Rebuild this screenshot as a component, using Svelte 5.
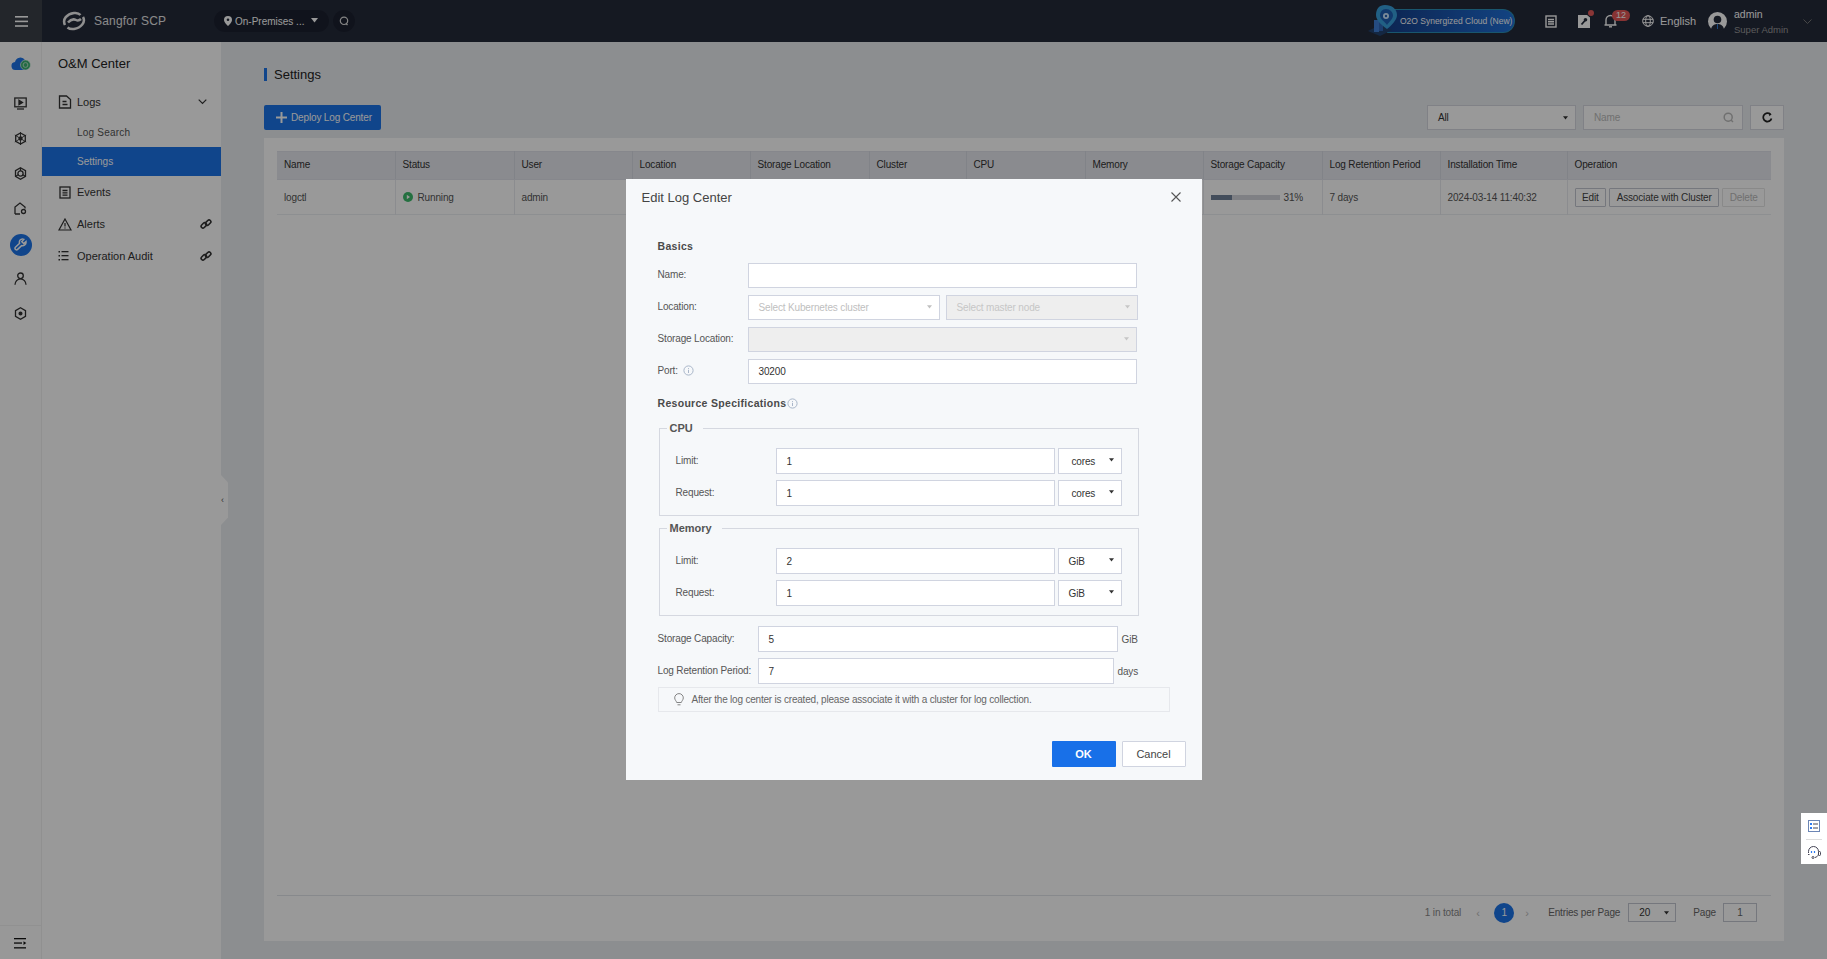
<script>
  const columns = [
    { name: "Name", width: 118 },
    { name: "Status", width: 119 },
    { name: "User", width: 118 },
    { name: "Location", width: 118 },
    { name: "Storage Location", width: 119 },
    { name: "Cluster", width: 97 },
    { name: "CPU", width: 119 },
    { name: "Memory", width: 118 },
    { name: "Storage Capacity", width: 119 },
    { name: "Log Retention Period", width: 118 },
    { name: "Installation Time", width: 127 },
    { name: "Operation", width: 204 }
  ];

  const resources = [
    { title: "CPU", unit: "cores", limit: 1, request: 1 },
    { title: "Memory", unit: "GiB", limit: 2, request: 1 }
  ];
</script>

{#snippet caret()}
  <svg class="caret" viewBox="0 0 7 5"><path d="M0 0h7L3.500 4.500z" fill="currentColor" /></svg>
{/snippet}

{#snippet link()}
  <svg class="link" width="12" height="12" viewBox="0 0 12 12" fill="none" stroke="#333" stroke-width="1.600">
    <rect x="0.800" y="5.600" width="6" height="3.600" rx="1.800" transform="rotate(-45 3.800 7.400)" />
    <rect x="5.200" y="2.800" width="6" height="3.600" rx="1.800" transform="rotate(-45 8.200 4.600)" />
  </svg>
{/snippet}

{#snippet info()}
  <svg width="11" height="11" viewBox="0 0 11 11" fill="none" stroke="#a9b6c9">
    <circle cx="5.500" cy="5.500" r="4.600" />
    <path d="M5.500 3v.9M5.500 4.800v3.200" />
  </svg>
{/snippet}

<div class="page">
  <header class="topbar">
    <button class="burger" aria-label="Menu">
      <svg width="13" height="11" viewBox="0 0 13 11" fill="#fff"><rect width="13" height="1.600" /><rect y="4.600" width="13" height="1.600" /><rect y="9.200" width="13" height="1.600" /></svg>
    </button>
    <div class="brand">
      <svg width="24" height="20" viewBox="0 0 24 20" fill="none" stroke="#efefef" stroke-width="2.500">
        <path d="M3 14C0 8 5 3 12 2c3-.4 5 .3 6.500 2" />
        <path d="M21 6c3 5-2 11-9 12-3 .4-5-.3-6.500-1.500" />
        <path d="M6 11.500c3-3.500 6-3.500 8-2.500s3 .8 5-1" />
      </svg>
      <span>Sangfor SCP</span>
    </div>
    <div class="scope">
      <svg width="8" height="10" viewBox="0 0 8 10"><path d="M4 0a4 4 0 0 1 4 4c0 2.500-4 6-4 6S0 6.500 0 4a4 4 0 0 1 4-4z" fill="#fff" /><circle cx="4" cy="3.800" r="1.300" fill="#232a3a" /></svg>
      <span>On-Premises ...</span>
      {@render caret()}
    </div>
    <div class="scope-search">
      <svg width="10" height="10" viewBox="0 0 10 10" fill="none" stroke="#ddd" stroke-width="1.200"><circle cx="5" cy="4.800" r="3.700" /><path d="M7 7.500l1.500 1.500" /></svg>
    </div>

    <div class="top-right">
      <div class="promo">
        <svg class="promo-art" width="31" height="32" viewBox="0 0 31 32">
          <path d="M0 26l12-6 12 5-12 6z" fill="#22426e" />
          <rect x="6" y="15" width="5" height="12" fill="#3f7fd8" />
          <rect x="11" y="17" width="4" height="9" fill="#2f66b8" />
          <path d="M17 0c7 0 12 4 12 10 0 5-6 11-10 14-4-3-11-8-11-14C8 4 11 0 17 0z" fill="#38a0dc" />
          <path d="M18 4c4 0 7 3 7 6.500S21 17 19 20c-2-3-7-6-7-9.500S14 4 18 4z" fill="#1f5fb5" />
          <circle cx="18" cy="11" r="3" fill="#cfe8ff" />
          <circle cx="18" cy="11" r="1.200" fill="#1f5fb5" />
        </svg>
        <span>O2O Synergized Cloud (New)</span>
      </div>
      <svg class="ti" width="12" height="13" viewBox="0 0 12 13" fill="none" stroke="#fff" stroke-width="1.400"><rect x="1" y="1" width="10" height="11" /><path d="M3 4.500h6M3 6.800h6M3 9h6" /></svg>
      <span class="ti-wrap tool">
        <svg width="12" height="14" viewBox="0 0 12 14"><path d="M0 1h9l3 2.500V14H0z" fill="#fff" /><path d="M3.500 10.500L7 6.500" stroke="#232a3a" stroke-width="1.800" fill="none" /><circle cx="7.500" cy="5.800" r="1.800" fill="#232a3a" /></svg>
        <i class="dot"></i>
      </span>
      <span class="ti-wrap bell">
        <svg width="13" height="14" viewBox="0 0 13 14" fill="none" stroke="#fff" stroke-width="1.400"><path d="M2 10.500V6a4.500 4.500 0 0 1 9 0v4.500M.5 11h12" /><path d="M5 12.800h3" /></svg>
        <b class="badge">12</b>
      </span>
      <span class="lang">
        <svg width="12" height="12" viewBox="0 0 12 12" fill="none" stroke="#fff"><circle cx="6" cy="6" r="5.300" /><ellipse cx="6" cy="6" rx="2.300" ry="5.300" /><path d="M.8 4.300h10.400M.8 7.700h10.400" /></svg>
        English
      </span>
      <div class="user">
        <svg width="19" height="19" viewBox="0 0 19 19"><circle cx="9.500" cy="9.500" r="9.500" fill="#fff" /><circle cx="9.500" cy="7.500" r="3.800" fill="#232a3a" /><path d="M3 17c1-4 4-5 6.500-5s5.500 1 6.500 5a9.500 9.500 0 0 1-13 0z" fill="#232a3a" /><path d="M9.500 12v5" stroke="#2f7bd6" /></svg>
        <div class="user-text">
          <span class="uname">admin</span>
          <span class="urole">Super Admin</span>
        </div>
        <svg class="uchev" width="9" height="5" viewBox="0 0 9 5" fill="none" stroke="#777"><path d="M.5.500l4 4 4-4" /></svg>
      </div>
    </div>
  </header>

  <div class="body">
    <nav class="rail">
      <svg class="r-ico cloud" width="20" height="15" viewBox="0 0 20 15"><path d="M5 14a4 4 0 0 1-1-8 5.500 5.500 0 0 1 10-2l2 10z" fill="#1d73e8" /><circle cx="14.500" cy="9" r="5" fill="#3bb273" stroke="#fff" stroke-width=".6" /><circle cx="14.500" cy="9" r="2.400" fill="none" stroke="#b7e6c8" /></svg>
      <svg class="r-ico" width="13" height="13" viewBox="0 0 13 13" fill="none" stroke="#333" stroke-width="1.300"><rect x=".8" y="1" width="11.400" height="8.800" /><path d="M3 12h7" /><path d="M5 3.200l3.500 2.200L5 7.600z" fill="#333" /></svg>
      <svg class="r-ico" width="13" height="13" viewBox="0 0 13 13" fill="none" stroke="#333" stroke-width="1.300"><path d="M6.500 1l4.800 2.700v5.600L6.500 12 1.700 9.300V3.700z" /><circle cx="6.500" cy="6.500" r="1.500" fill="#333" /><path d="M6.500 0v13M.8 3l11.400 7M12.200 3L.8 10" stroke-width=".9" /></svg>
      <svg class="r-ico" width="13" height="13" viewBox="0 0 13 13" fill="none" stroke="#333" stroke-width="1.300"><path d="M6.500 .8l5 2.900v5.600l-5 2.900-5-2.900V3.700z" /><circle cx="6.500" cy="6.500" r="2.600" /><path d="M6.500 3.900V1M4.200 7.800l-2.500 1.400M8.800 7.800l2.500 1.400" /></svg>
      <svg class="r-ico" width="13" height="13" viewBox="0 0 13 13" fill="none" stroke="#333" stroke-width="1.300"><path d="M1 12V5l5-4 5 4v1.500M1 12h5" /><circle cx="9.500" cy="9.500" r="2" /></svg>
      <span class="r-active">
        <svg width="13" height="13" viewBox="0 0 13 13" fill="none" stroke="#fff" stroke-width="1.500"><path d="M12 3.500L9.700 5.600 7.800 3.800 9.800 1.400C8 .6 5.800 1.500 5.400 3.400c-.2.800 0 1.500.2 2L1.400 9.300c-.8.800-.4 2 .4 2.400.6.300 1.300.2 1.800-.3l4-3.800c2 .6 4.800-1 4.400-4.100z" /></svg>
      </span>
      <svg class="r-ico" width="13" height="13" viewBox="0 0 13 13" fill="none" stroke="#333" stroke-width="1.300"><circle cx="6.500" cy="3.800" r="2.800" /><path d="M1 12.800c0-3.200 2.400-6 5.500-6s5.500 2.800 5.500 6" /></svg>
      <svg class="r-ico" width="13" height="13" viewBox="0 0 13 13" fill="none" stroke="#333" stroke-width="1.300"><path d="M6.500 .8l5 2.900v5.600l-5 2.900-5-2.900V3.700z" /><circle cx="6.500" cy="6.500" r="1.400" fill="#333" /></svg>
      <div class="rail-foot">
        <svg width="13" height="11" viewBox="0 0 13 11" fill="#111"><rect width="12" height="1.300" /><rect y="4.400" width="8" height="1.300" /><rect y="9.200" width="12" height="1.300" /><path d="M9.500 3.300l2.800 1.800-2.800 1.800z" /></svg>
      </div>
    </nav>

    <aside class="side">
      <h2>O&amp;M Center</h2>
      <ul>
        <li class="top">
          <svg width="13" height="14" viewBox="0 0 13 14" fill="none" stroke="#333" stroke-width="1.300"><path d="M1 1h7l4 3.500V13H1z" /><path d="M4 6.500h4M4 9.500h5" /></svg>
          <span>Logs</span>
          <svg class="chev" width="9" height="6" viewBox="0 0 9 6" fill="none" stroke="#333" stroke-width="1.200"><path d="M.7.700l3.800 3.800L8.300.7" /></svg>
        </li>
        <li class="sub search">Log Search</li>
        <li class="sub active">Settings</li>
        <li class="top">
          <svg width="13" height="13" viewBox="0 0 13 13" fill="none" stroke="#333" stroke-width="1.300"><rect x="1.500" y="1" width="10" height="11" /><path d="M4 4.500h5M4 6.800h5M4 9.200h5" /></svg>
          <span>Events</span>
        </li>
        <li class="top">
          <svg width="14" height="13" viewBox="0 0 14 13" fill="none" stroke="#333" stroke-width="1.200"><path d="M7 1l6 11H1z" /><path d="M7 5v3.500M7 9.500v1" /></svg>
          <span>Alerts</span>
          {@render link()}
        </li>
        <li class="top">
          <svg width="13" height="10" viewBox="0 0 13 10" fill="#333"><rect width="1.500" height="1.500" /><rect x="3" width="7" height="1.300" /><rect y="4" width="1.500" height="1.500" /><rect x="3" y="4" width="7" height="1.300" /><rect y="8" width="1.500" height="1.500" /><rect x="3" y="8" width="7" height="1.300" /></svg>
          <span>Operation Audit</span>
          {@render link()}
        </li>
      </ul>
      <div class="collapse"><span>‹</span></div>
    </aside>

    <main class="main">
      <h1>Settings</h1>
      <div class="toolbar">
        <button class="deploy">
          <svg width="11" height="11" viewBox="0 0 11 11" fill="#fff"><rect x="4.500" width="2" height="11" /><rect y="4.500" width="11" height="2" /></svg>
          Deploy Log Center
        </button>
        <div class="tool-right">
          <div class="f-select"><span>All</span>{@render caret()}</div>
          <div class="f-search">
            <span>Name</span>
            <svg width="11" height="11" viewBox="0 0 11 11" fill="none" stroke="#bbb" stroke-width="1.500"><circle cx="5.200" cy="5.200" r="4" /><path d="M8 8l2 2" /></svg>
          </div>
          <button class="refresh" aria-label="Refresh">
            <svg width="11" height="11" viewBox="0 0 11 11" fill="none" stroke="#222" stroke-width="1.700"><path d="M9.500 6.500A4.200 4.200 0 1 1 8.300 2.200" /><path d="M7 0.800l2.600 1.500-2.300 1.900z" fill="#222" stroke="none" /></svg>
          </button>
        </div>
      </div>

      <section class="panel">
        <table>
          <colgroup>
            {#each columns as col}
              <col style="width: {col.width}px" />
            {/each}
          </colgroup>
          <thead>
            <tr>
              {#each columns as col}
                <th>{col.name}</th>
              {/each}
            </tr>
          </thead>
          <tbody>
            <tr>
              <td>logctl</td>
              <td>
                <span class="status">
                  <svg width="10" height="10" viewBox="0 0 10 10"><circle cx="5" cy="5" r="5" fill="#3dbb6c" /><path d="M3.800 2.800l3.200 2.200-3.200 2.200z" fill="#fff" /></svg>
                  Running
                </span>
              </td>
              <td>admin</td>
              <td></td>
              <td></td>
              <td></td>
              <td></td>
              <td></td>
              <td>
                <span class="usage"><span class="track"><span class="fill" style="width: 31%"></span></span>31%</span>
              </td>
              <td>7 days</td>
              <td>2024-03-14 11:40:32</td>
              <td>
                <span class="ops">
                  <button>Edit</button>
                  <button>Associate with Cluster</button>
                  <button class="off">Delete</button>
                </span>
              </td>
            </tr>
          </tbody>
        </table>

        <footer class="pager">
          <span class="total">1 in total</span>
          <span class="arrow">‹</span>
          <span class="current">1</span>
          <span class="arrow next">›</span>
          <span class="lbl">Entries per Page</span>
          <div class="per"><span>20</span>{@render caret()}</div>
          <span class="lbl pg">Page</span>
          <div class="pg-box">1</div>
        </footer>
      </section>
    </main>
  </div>
</div>

<div class="overlay">
  <div class="dialog">
    <div class="d-head">
      <span>Edit Log Center</span>
      <svg width="10" height="10" viewBox="0 0 10 10" fill="none" stroke="#555" stroke-width="1.100"><path d="M.5.500l9 9M9.500.500l-9 9" /></svg>
    </div>

    <div class="d-body">
      <h3 class="basics">Basics</h3>
      <div class="rows">
        <div class="row">
          <label for="lc-name">Name:</label>
          <div class="inp" id="lc-name"></div>
        </div>
        <div class="row">
          <span class="label">Location:</span>
          <div class="sel-pair">
            <div class="inp sel ph"><span>Select Kubernetes cluster</span>{@render caret()}</div>
            <div class="inp sel ph off"><span>Select master node</span>{@render caret()}</div>
          </div>
        </div>
        <div class="row">
          <span class="label">Storage Location:</span>
          <div class="inp sel off"><span></span>{@render caret()}</div>
        </div>
        <div class="row">
          <span class="label port">Port: {@render info()}</span>
          <div class="inp">30200</div>
        </div>
      </div>

      <h3 class="res">Resource Specifications {@render info()}</h3>

      {#each resources as group}
        <div class="group">
          <span class="legend">{group.title}</span>
          <div class="g-row">
            <span class="label">Limit:</span>
            <div class="inp num">{group.limit}</div>
            <div class="inp sel unit"><span class:core={group.unit === "cores"}>{group.unit}</span>{@render caret()}</div>
          </div>
          <div class="g-row">
            <span class="label">Request:</span>
            <div class="inp num">{group.request}</div>
            <div class="inp sel unit"><span class:core={group.unit === "cores"}>{group.unit}</span>{@render caret()}</div>
          </div>
        </div>
      {/each}

      <div class="cap-row first">
        <span class="label s">Storage Capacity:</span>
        <div class="inp cap">5</div>
        <span class="suffix">GiB</span>
      </div>
      <div class="cap-row">
        <span class="label s">Log Retention Period:</span>
        <div class="inp ret">7</div>
        <span class="suffix">days</span>
      </div>

      <div class="tip">
        <svg width="10" height="13" viewBox="0 0 10 13" fill="none" stroke="#777" stroke-width=".9"><path d="M5 .6a4.300 4.300 0 0 1 4.300 4.300c0 2-1.600 3-2 4.600H2.700c-.4-1.600-2-2.600-2-4.600A4.300 4.300 0 0 1 5 .6z" /><path d="M3.500 11.800h3" /></svg>
        <span>After the log center is created, please associate it with a cluster for log collection.</span>
      </div>
    </div>

    <div class="d-foot">
      <button class="ok">OK</button>
      <button class="cancel">Cancel</button>
    </div>
  </div>
</div>

<div class="float">
  <svg width="12" height="12" viewBox="0 0 12 12"><rect width="12" height="12" fill="#6c86b5" /><rect x="1" y="1" width="10" height="10" fill="#fff" /><rect x="2" y="3" width="2" height="2" fill="#2f7bf0" /><rect x="2" y="7" width="2" height="2" fill="#2f7bf0" /><path d="M5 4h5M5 8h5" stroke="#445" /></svg>
  <i></i>
  <svg width="14" height="13" viewBox="0 0 14 13" fill="none" stroke="#445"><path d="M1.500 7V5.500a5 5 0 0 1 10 0V8c0 2-2 3-3.500 3.500" /><rect x="11.500" y="5.500" width="2" height="4" rx="1" /><circle cx="6" cy="11.500" r="1" /><path d="M4.500 5v2M7.500 5v2" stroke="#2f7bf0" stroke-width="1.200" /><path d="M1 8.500h1.500" /></svg>
</div>

<style>
  :global(body) {
    margin: 0;
    font-family: "Liberation Sans", Arial, sans-serif;
    overflow: hidden;
  }

  h1, h2, h3, ul {
    margin: 0;
    padding: 0;
    font-weight: normal;
  }

  button {
    font: inherit;
    cursor: pointer;
  }

  .caret {
    width: 5px;
    height: 4px;
    flex: none;
  }

  .page {
    display: flex;
    flex-direction: column;
    height: 959px;
    color: #333;
    font-size: 10px;
    letter-spacing: -0.15px;
  }

  .topbar {
    display: flex;
    align-items: center;
    flex: 0 0 42px;
    background: #242a3a;
    color: #fff;
    letter-spacing: 0;
  }

  .burger {
    width: 42px;
    height: 42px;
    flex: none;
    border: 0;
    background: #3b4049;
    display: flex;
    align-items: center;
    justify-content: center;
  }

  .brand {
    display: flex;
    align-items: center;
    gap: 8px;
    margin-left: 20px;
    font-size: 12px;
    color: #e6e6e6;
    width: 152px;
    letter-spacing: 0.2px;
  }

  .scope {
    display: flex;
    align-items: center;
    width: 115px;
    height: 22px;
    box-sizing: border-box;
    padding: 0 11px 0 10px;
    border-radius: 11px;
    background: #1c2130;
    font-size: 10px;
    gap: 3px;
  }

  .scope .caret {
    width: 7px;
    height: 5px;
    margin-left: auto;
    margin-bottom: 2px;
  }

  .scope-search {
    width: 22px;
    height: 22px;
    margin-left: 4px;
    border-radius: 50%;
    background: #1c2130;
    display: flex;
    align-items: center;
    justify-content: center;
  }

  .top-right {
    margin-left: auto;
    display: flex;
    align-items: center;
  }

  .promo {
    position: relative;
    width: 128px;
    height: 24px;
    box-sizing: border-box;
    padding-left: 13px;
    border: 1px solid #2a8fb8;
    border-left: 0;
    border-radius: 0 12px 12px 0;
    background: linear-gradient(90deg, #163f8a, #1f70d8);
    font-size: 8.5px;
    line-height: 22px;
    white-space: nowrap;
    margin-right: 30px;
  }

  .promo-art {
    position: absolute;
    left: -19px;
    top: -5px;
  }

  .ti {
    margin-right: 21px;
  }

  .ti-wrap {
    position: relative;
    display: flex;
  }

  .tool {
    margin-right: 14px;
  }

  .dot {
    position: absolute;
    right: -4px;
    top: -4px;
    width: 6px;
    height: 6px;
    border-radius: 50%;
    background: #e45a5a;
  }

  .bell {
    margin-right: 25px;
  }

  .badge {
    position: absolute;
    left: 8px;
    top: -4px;
    width: 18px;
    height: 11px;
    border-radius: 6px;
    background: #e25555;
    font-size: 9px;
    font-weight: normal;
    line-height: 11px;
    text-align: center;
  }

  .lang {
    display: flex;
    align-items: center;
    gap: 6px;
    font-size: 11px;
    margin-right: 12px;
  }

  .user {
    display: flex;
    align-items: center;
    width: 119px;
  }

  .user-text {
    display: flex;
    flex-direction: column;
    margin-left: 7px;
    gap: 4px;
    width: 60px;
  }

  .uname {
    font-size: 10.5px;
    line-height: 12px;
  }

  .urole {
    font-size: 9.5px;
    line-height: 11px;
    color: #999;
  }

  .uchev {
    margin-left: 9px;
  }

  .body {
    display: flex;
    flex: 1;
    min-height: 0;
  }

  .rail {
    position: relative;
    flex: 0 0 42px;
    box-sizing: border-box;
    border-right: 1px solid #f0f0f0;
    background: #fefefe;
    display: flex;
    flex-direction: column;
    align-items: center;
    padding-top: 14px;
    gap: 22px;
  }

  .r-ico {
    flex: none;
  }

  .cloud {
    margin-bottom: 3.500px;
  }

  .r-active {
    width: 22px;
    height: 22px;
    margin: -3px 0 -6px;
    border-radius: 50%;
    background: #1b73e8;
    display: flex;
    align-items: center;
    justify-content: center;
  }

  .rail-foot {
    margin-top: auto;
    width: 100%;
    height: 34px;
    border-top: 1px solid #f2f2f2;
    display: flex;
    justify-content: center;
    padding-top: 12px;
    box-sizing: border-box;
  }

  .side {
    position: relative;
    flex: 0 0 179px;
    background: #fff;
    letter-spacing: 0;
  }

  .side h2 {
    font-size: 13px;
    line-height: 16px;
    margin: 14px 0 0 16px;
    color: #222;
  }

  .side ul {
    list-style: none;
    margin-top: 14px;
  }

  .side li {
    display: flex;
    align-items: center;
    height: 29px;
    font-size: 10px;
  }

  .side .top {
    padding: 0 9px 0 16px;
    font-size: 11px;
    height: 32px;
    color: #333;
  }

  .top > svg:first-child {
    width: 14px;
    flex: none;
  }

  .top span {
    margin-left: 5px;
  }

  .chev, .link {
    margin-left: auto;
  }

  .chev {
    margin-right: 5px;
  }

  .sub {
    padding-left: 35px;
    color: #555;
  }

  .search {
    letter-spacing: 0.2px;
  }

  .active {
    background: #1b73e8;
    color: #fff;
  }

  .collapse {
    position: absolute;
    left: 100%;
    top: 433px;
    width: 7px;
    height: 50px;
    background: #fff;
    clip-path: polygon(0 0, 100% 15%, 100% 85%, 0 100%);
    display: flex;
    align-items: center;
    font-size: 9px;
    color: #555;
  }

  .main {
    flex: 1;
    min-width: 0;
    background: #eaedf0;
    padding: 0 43px;
  }

  h1 {
    margin-top: 26px;
    border-left: 3px solid #1b73e8;
    padding-left: 7px;
    font-size: 13px;
    line-height: 13px;
    color: #222;
    letter-spacing: 0;
  }

  .toolbar {
    display: flex;
    align-items: center;
    justify-content: space-between;
    margin-top: 24px;
  }

  .deploy {
    display: flex;
    align-items: center;
    gap: 4px;
    width: 117px;
    height: 25px;
    padding: 0 0 0 12px;
    border: 0;
    border-radius: 2px;
    background: #1b73e8;
    color: #fff;
    font-size: 10px;
    letter-spacing: -0.15px;
  }

  .tool-right {
    display: flex;
    gap: 7px;
  }

  .f-select, .f-search, .refresh {
    box-sizing: border-box;
    height: 25px;
    border: 1px solid #d5d8df;
    background: #fff;
    display: flex;
    align-items: center;
  }

  .f-select {
    width: 149px;
    padding: 0 7px 0 10px;
    justify-content: space-between;
  }

  .f-search {
    width: 160px;
    padding: 0 8px 0 10px;
    justify-content: space-between;
    color: #bbb;
  }

  .refresh {
    width: 34px;
    justify-content: center;
    padding: 0;
  }

  .panel {
    position: relative;
    box-sizing: border-box;
    margin-top: 8px;
    height: 803px;
    padding: 13px 13px 0;
    background: #fff;
  }

  table {
    table-layout: fixed;
    width: 1494px;
    border-collapse: collapse;
    border-bottom: 1px solid #eceef2;
  }

  th, td {
    text-align: left;
    font-weight: normal;
    padding: 0 7px;
    white-space: nowrap;
    overflow: hidden;
    border-right: 1px solid #e8eaef;
  }

  th:last-child, td:last-child {
    border-right: 0;
  }

  th {
    height: 28px;
    padding-bottom: 2px;
    box-sizing: border-box;
    background: #e6e8ee;
    border-top: 1px solid #dfe2e9;
    border-bottom: 1px solid #dfe2e9;
    border-right-color: #d8dbe3;
    color: #333;
  }

  td {
    height: 34px;
    color: #555;
  }

  .status {
    display: flex;
    align-items: center;
    gap: 5px;
  }

  .usage {
    display: flex;
    align-items: center;
    gap: 4px;
  }

  .track {
    display: block;
    width: 69px;
    height: 5px;
    background: #d4d6dc;
  }

  .fill {
    display: block;
    height: 5px;
    background: #718098;
  }

  .ops {
    display: flex;
    gap: 3px;
  }

  .ops button {
    height: 19px;
    padding: 0 6.500px;
    border: 1px solid #c4c7d0;
    border-radius: 1px;
    background: #fff;
    color: #444;
    font-size: 10px;
    letter-spacing: -0.15px;
  }

  .ops .off {
    color: #bbb;
    border-color: #e4e4e4;
  }

  .pager {
    position: absolute;
    left: 13px;
    right: 13px;
    bottom: 0;
    box-sizing: border-box;
    height: 46px;
    padding: 0 14px 12px 0;
    border-top: 1px solid #e2e4e9;
    display: flex;
    align-items: center;
    justify-content: flex-end;
    color: #666;
  }

  .total {
    color: #888;
    margin-right: 15px;
  }

  .arrow {
    color: #bbb;
    font-size: 11px;
    width: 6px;
  }

  .current {
    width: 20px;
    height: 20px;
    margin: 0 11px 0 12px;
    border-radius: 50%;
    background: #1b73e8;
    color: #fff;
    line-height: 20px;
    text-align: center;
  }

  .next {
    margin-right: 17px;
  }

  .lbl {
    color: #666;
  }

  .per {
    box-sizing: border-box;
    width: 48px;
    height: 19px;
    margin-left: 8px;
    padding: 0 6px 0 10px;
    border: 1px solid #c4c7d0;
    display: flex;
    align-items: center;
    justify-content: space-between;
    color: #333;
  }

  .pg {
    margin-left: 17px;
  }

  .pg-box {
    box-sizing: border-box;
    width: 34px;
    height: 19px;
    margin-left: 7px;
    border: 1px solid #c4c7d0;
    text-align: center;
    line-height: 17px;
  }

  .overlay {
    position: fixed;
    inset: 0;
    background: rgba(0, 0, 0, 0.4);
    display: flex;
    align-items: center;
    justify-content: center;
  }

  .dialog {
    width: 576px;
    height: 601px;
    background: #f6f8fa;
    color: #333;
    font-size: 10px;
    letter-spacing: -0.15px;
    display: flex;
    flex-direction: column;
  }

  .d-head {
    flex: 0 0 36px;
    display: flex;
    align-items: center;
    justify-content: space-between;
    padding: 0 21px 0 16px;
    font-size: 13px;
    color: #444;
    letter-spacing: 0;
  }

  .d-body {
    padding: 24px 32px 0;
  }

  h3 {
    font-size: 10.5px;
    font-weight: bold;
    line-height: 14px;
    color: #4a4a4a;
    letter-spacing: 0.3px;
  }

  .rows {
    display: flex;
    flex-direction: column;
    gap: 7px;
    margin-top: 10px;
  }

  .row {
    display: flex;
    align-items: center;
    width: 479px;
  }

  .row label, .row .label {
    flex: 0 0 90px;
    margin-top: -2px;
    color: #555;
  }

  .port {
    display: flex;
    align-items: center;
    gap: 5px;
  }

  .inp {
    box-sizing: border-box;
    flex: 1;
    height: 25px;
    padding: 0 10px;
    border: 1px solid #d0d4e0;
    background: #fff;
    display: flex;
    align-items: center;
    color: #333;
  }

  .sel {
    justify-content: space-between;
    padding-right: 7px;
  }

  .sel .caret {
    margin-bottom: 2px;
  }

  .ph {
    color: #c0c0c0;
  }

  .off {
    background: #eeeeee;
    color: #c6c6c6;
  }

  .sel-pair {
    flex: 1;
    display: flex;
    gap: 6px;
    margin-right: -1px;
  }

  .res {
    display: flex;
    align-items: center;
    gap: 1px;
    margin-top: 12px;
  }

  .group {
    position: relative;
    box-sizing: border-box;
    height: 88px;
    width: 480px;
    margin: 18px 0 0 1px;
    padding: 19px 17px 0 16px;
    border: 1px solid #d5d8e0;
    display: flex;
    flex-direction: column;
    gap: 6px;
  }

  .group + .group {
    margin-top: 12px;
  }

  .legend {
    position: absolute;
    left: 7px;
    top: -8px;
    padding: 0 10px 0 3px;
    background: #f6f8fa;
    font-size: 11px;
    line-height: 14px;
    font-weight: bold;
    color: #555;
    letter-spacing: 0;
  }

  .g-row {
    display: flex;
    align-items: center;
    height: 26px;
  }

  .g-row .label {
    flex: 0 0 100px;
    margin-top: -2px;
    color: #555;
  }

  .num {
    flex: 0 0 279px;
    height: 26px;
  }

  .unit {
    flex: 0 0 64px;
    height: 26px;
    margin-left: 3px;
  }

  .core {
    margin-left: 3px;
  }

  .cap-row {
    display: flex;
    align-items: center;
    margin-top: 6px;
    width: 480px;
  }

  .first {
    margin-top: 10px;
  }

  .label.s {
    flex: 0 0 100px;
    margin-top: -2px;
    color: #555;
  }

  .cap {
    flex: 0 0 360px;
    height: 26px;
  }

  .ret {
    flex: 0 0 356px;
    height: 26px;
  }

  .suffix {
    margin-left: 4px;
    color: #555;
  }

  .tip {
    box-sizing: border-box;
    display: flex;
    align-items: center;
    gap: 8px;
    height: 25px;
    margin-top: 3px;
    padding-left: 15px;
    border: 1px solid #e6e8ec;
    color: #666;
    font-size: 10px;
    letter-spacing: -0.2px;
  }

  .d-foot {
    display: flex;
    justify-content: flex-end;
    gap: 6px;
    margin-top: 29px;
    padding-right: 16px;
  }

  .d-foot button {
    width: 64px;
    height: 26px;
    border-radius: 1px;
    font-size: 11px;
  }

  .ok {
    border: 0;
    background: #1870e8;
    color: #fff;
    font-weight: bold;
  }

  .cancel {
    border: 1px solid #d0d4e0;
    background: #fff;
    color: #444;
  }

  .float {
    position: fixed;
    right: 0;
    top: 813px;
    width: 26px;
    height: 51px;
    background: #fff;
    display: flex;
    flex-direction: column;
    align-items: center;
    justify-content: space-between;
    box-sizing: border-box;
    padding: 7px 0 5px;
  }

  .float i {
    display: block;
    width: 16px;
    height: 1px;
    background: #ddd;
  }
</style>
